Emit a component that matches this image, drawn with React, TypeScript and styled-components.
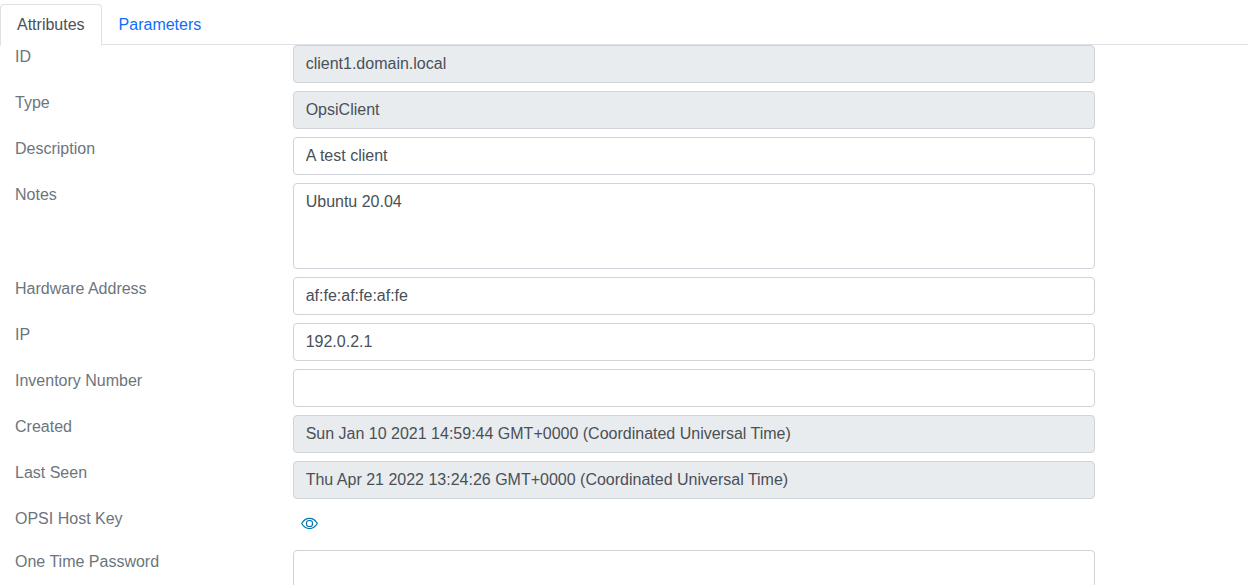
import React, { useState } from "react";
import styled, { createGlobalStyle, css } from "styled-components";

const GlobalStyle = createGlobalStyle`
  *, *::before, *::after { box-sizing: border-box; }
  html { scrollbar-width: none; }
  body {
    margin: 0;
    background: #fff;
    color: #495057;
    font-family: "Liberation Sans", Arial, sans-serif;
    font-size: 16px;
    line-height: 24px;
  }
`;

const Page = styled.div`
  padding-top: 4px;
`;

const TabBar = styled.nav`
  display: flex;
  height: 41px;
  border-bottom: 1px solid #dee2e6;
`;

const Tab = styled.a<{ $active?: boolean }>`
  height: 42px;
  padding: 8px 16px;
  border: 1px solid transparent;
  border-radius: 4px 4px 0 0;
  color: #0d6efd;
  text-decoration: none;
  ${(p) =>
    p.$active &&
    css`
      color: #495057;
      background: #fff;
      border-color: #dee2e6 #dee2e6 #fff;
    `}
`;

const Form = styled.form`
  display: flex;
  flex-direction: column;
  gap: 8px;
`;

const Row = styled.div`
  display: grid;
  grid-template-columns: 22.25% calc(100% * 2 / 3);
  align-items: start;
`;

const Label = styled.label`
  padding: 0 15px;
  color: #6c757d;
`;

const Cell = styled.div`
  display: flex;
  padding: 0 15px;
`;

const control = css`
  width: 100%;
  padding: 6px 12px;
  border: 1px solid #ced4da;
  border-radius: 4px;
  background: #fff;
  color: #495057;
  font: inherit;
`;

const Input = styled.input`
  ${control}
  height: 38px;
  &:read-only { background: #e9ecef; }
`;

const TextArea = styled.textarea`
  ${control}
  height: 86px;
  resize: none;
  overflow: auto;
`;

const IconButton = styled.button`
  display: flex;
  align-items: center;
  height: 35px;
  padding: 0 8px 2px;
  border: 0;
  background: transparent;
  color: #0277b0;
  cursor: pointer;
`;

const EyeIcon = () => (
  <svg width="17" height="17" viewBox="0 0 17 17" fill="none" stroke="currentColor" strokeWidth="1.2" aria-hidden="true">
    <path d="M0.7 8.5C2.6 5.2 5.3 3.4 8.5 3.4s5.9 1.8 7.8 5.1c-1.9 3.3-4.6 5.1-7.8 5.1S2.6 11.8 0.7 8.5z" />
    <rect x="5.5" y="5.5" width="6" height="6" rx="2.5" />
  </svg>
);

interface Field {
  id: string;
  label: string;
  value: string;
  kind?: "readonly" | "notes" | "key";
}

const fields: Field[] = [
  { id: "id", label: "ID", value: "client1.domain.local", kind: "readonly" },
  { id: "type", label: "Type", value: "OpsiClient", kind: "readonly" },
  { id: "description", label: "Description", value: "A test client" },
  { id: "notes", label: "Notes", value: "Ubuntu 20.04", kind: "notes" },
  { id: "hardware", label: "Hardware Address", value: "af:fe:af:fe:af:fe" },
  { id: "ip", label: "IP", value: "192.0.2.1" },
  { id: "inventory", label: "Inventory Number", value: "" },
  { id: "created", label: "Created", value: "Sun Jan 10 2021 14:59:44 GMT+0000 (Coordinated Universal Time)", kind: "readonly" },
  { id: "seen", label: "Last Seen", value: "Thu Apr 21 2022 13:24:26 GMT+0000 (Coordinated Universal Time)", kind: "readonly" },
  { id: "hostkey", label: "OPSI Host Key", value: "", kind: "key" },
  { id: "otp", label: "One Time Password", value: "" },
];

function Control({ field }: { field: Field }) {
  if (field.kind === "notes") return <TextArea id={field.id} defaultValue={field.value} />;
  if (field.kind === "key")
    return (
      <IconButton type="button" id={field.id}>
        <EyeIcon />
      </IconButton>
    );
  return <Input id={field.id} type="text" defaultValue={field.value} readOnly={field.kind === "readonly"} />;
}

export default function App() {
  const [tab, setTab] = useState("Attributes");
  return (
    <Page>
      <GlobalStyle />
      <TabBar>
        {["Attributes", "Parameters"].map((name) => (
          <Tab key={name} href={"#" + name.toLowerCase()} $active={tab === name} onClick={() => setTab(name)}>
            {name}
          </Tab>
        ))}
      </TabBar>
      <Form>
        {fields.map((field) => (
          <Row key={field.id}>
            <Label htmlFor={field.id}>{field.label}</Label>
            <Cell>
              <Control field={field} />
            </Cell>
          </Row>
        ))}
      </Form>
    </Page>
  );
}
